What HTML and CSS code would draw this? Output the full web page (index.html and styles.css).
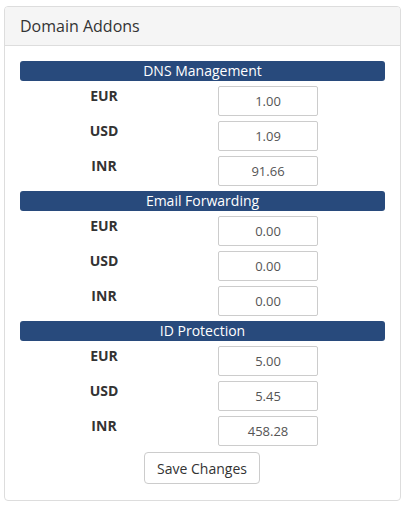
FILE: index.html
```html
<!DOCTYPE html>
<html>
<head>
    <title>Domain Addons</title>
    <link rel="stylesheet" href="styles.css">
</head>
<body>
    <div class="panel">
        <div class="panel-heading">Domain Addons</div>
        <form class="panel-body">
            <div class="addon-title">DNS Management</div>
            <div class="price-row"><label>EUR</label><input type="text" value="1.00"></div>
            <div class="price-row"><label>USD</label><input type="text" value="1.09"></div>
            <div class="price-row"><label>INR</label><input type="text" value="91.66"></div>

            <div class="addon-title">Email Forwarding</div>
            <div class="price-row"><label>EUR</label><input type="text" value="0.00"></div>
            <div class="price-row"><label>USD</label><input type="text" value="0.00"></div>
            <div class="price-row"><label>INR</label><input type="text" value="0.00"></div>

            <div class="addon-title">ID Protection</div>
            <div class="price-row"><label>EUR</label><input type="text" value="5.00"></div>
            <div class="price-row"><label>USD</label><input type="text" value="5.45"></div>
            <div class="price-row"><label>INR</label><input type="text" value="458.28"></div>

            <div class="actions">
                <button type="submit">Save Changes</button>
            </div>
        </form>
    </div>
</body>
</html>
```

FILE: styles.css
```css
body {
    font-family: "Open Sans", Arial, sans-serif;
    color: #333;
    margin: 6px 6px 0 4px;
    background: #fff;
}
.panel {
    border: 1px solid #ddd;
    border-radius: 4px;
    background: #fff;
}
.panel-heading {
    background: #f5f5f5;
    border-bottom: 1px solid #ddd;
    border-radius: 3px 3px 0 0;
    padding: 8px 15px;
    font-size: 16px;
    line-height: 22px;
}
.panel-body {
    display: flex;
    flex-direction: column;
    gap: 5px;
    padding: 15px 15px 16px;
    margin: 0;
}
.addon-title {
    background: #284a7c;
    color: #fff;
    border-radius: 3px;
    text-align: center;
    font-size: 14px;
    line-height: 20px;
    height: 20px;
}
.price-row {
    display: flex;
    align-items: flex-start;
    height: 30px;
}
.price-row label {
    width: 168px;
    text-align: center;
    font-weight: bold;
    font-size: 14px;
    line-height: 20px;
}
.price-row input {
    margin-left: 30px;
    width: 100px;
    height: 30px;
    box-sizing: border-box;
    border: 1px solid #ccc;
    border-radius: 2px;
    padding: 0 6px;
    font-family: inherit;
    font-size: 13px;
    color: #555;
    text-align: center;
    background: #fff;
}
.actions {
    display: flex;
    justify-content: center;
    margin-top: 1px;
}
.actions button {
    font-family: inherit;
    font-size: 14px;
    color: #333;
    background: #fff;
    border: 1px solid #ccc;
    border-radius: 4px;
    height: 32px;
    padding: 0 12px;
    margin-right: 1px;
}
```
